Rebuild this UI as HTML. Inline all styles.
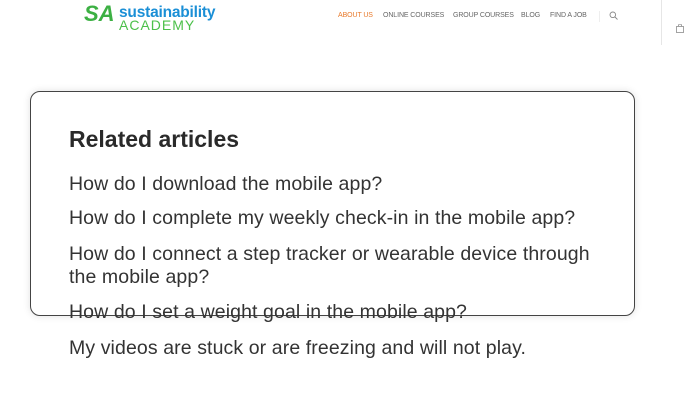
<!DOCTYPE html>
<html><head><style>
body{margin:0;width:700px;height:400px;background:#fff;overflow:hidden;position:relative;font-family:"Liberation Sans",sans-serif}
.hdr{position:absolute;left:0;top:0;width:700px;height:45px;background:#fff}
.logo1{position:absolute;left:84px;top:1px;font-size:22px;font-weight:bold;font-style:italic;color:#3cb043}
.logo2{position:absolute;left:119px;top:4px;font-size:15.5px;font-weight:bold;color:#1b8fd6;letter-spacing:-0.2px}
.logo3{position:absolute;left:119px;top:17px;font-size:14px;color:#4cc04a;letter-spacing:1px}
.nav{position:absolute;top:12px;font-size:7px;color:#666;white-space:nowrap;letter-spacing:-0.1px}
.vl{position:absolute;left:661px;top:0;width:1px;height:45px;background:#e6e6e6}
.box{position:absolute;left:30px;top:91px;width:603px;height:223px;border:1.5px solid #444;border-radius:10px;box-shadow:0 0 8px rgba(0,0,0,0.12)}
.t{position:absolute;left:69px;color:#333;font-size:19.5px;letter-spacing:0.1px;white-space:nowrap}
</style></head><body>
<div class="hdr">
<div class="logo1">SA</div>
<div class="logo2">sustainability</div>
<div class="logo3">ACADEMY</div>
<div class="nav" style="left:338px;color:#e87a2c">ABOUT US</div>
<div class="nav" style="left:383px">ONLINE COURSES</div>
<div class="nav" style="left:453px">GROUP COURSES</div>
<div class="nav" style="left:521px">BLOG</div>
<div class="nav" style="left:550px">FIND A JOB</div>
<div style="position:absolute;left:599px;top:11px;width:1px;height:11px;background:#eee"></div>
<svg style="position:absolute;left:609px;top:11px" width="9" height="9"><circle cx="3.8" cy="3.8" r="2.8" fill="none" stroke="#888" stroke-width="0.9"/><line x1="6" y1="6" x2="8.5" y2="8.5" stroke="#888" stroke-width="0.9"/></svg>
<div class="vl"></div>
<svg style="position:absolute;left:676px;top:24px" width="8" height="9"><rect x="0.5" y="2.5" width="7" height="6" fill="none" stroke="#999" stroke-width="0.9"/><path d="M2.5 2.5V1.5a1.5 1.5 0 0 1 3 0V2.5" fill="none" stroke="#999" stroke-width="0.9"/></svg>
</div>
<div class="box"></div>
<div class="t" style="top:126px;font-size:23px;letter-spacing:0;font-weight:bold;color:#2a2a2a">Related articles</div>
<div class="t" style="top:173px">How do I download the mobile app?</div>
<div class="t" style="top:207px">How do I complete my weekly check-in in the mobile app?</div>
<div class="t" style="top:243px;line-height:23px">How do I connect a step tracker or wearable device through<br>the mobile app?</div>
<div class="t" style="top:301px">How do I set a weight goal in the mobile app?</div>
<div class="t" style="top:337px">My videos are stuck or are freezing and will not play.</div>
</body></html>
